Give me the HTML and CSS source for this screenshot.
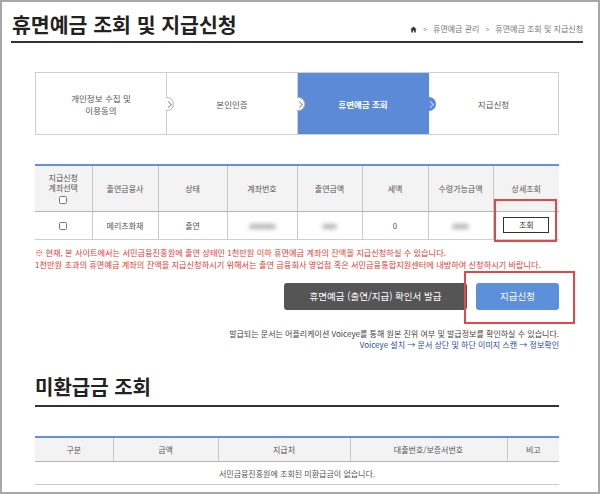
FILE: index.html
```html
<!DOCTYPE html>
<html lang="ko">
<head>
<meta charset="utf-8">
<title>휴면예금 조회 및 지급신청</title>
<link rel="stylesheet" href="styles.css">
</head>
<body>
<div class="page">
  <header class="top">
    <h1 class="title">휴면예금 조회 및 지급신청</h1>
    <nav class="crumb">
      <svg class="home" viewBox="0 0 10 10" width="7" height="7"><path d="M5 0.8 L0.6 5 H1.8 V9.2 H4.1 V6.4 H5.9 V9.2 H8.2 V5 H9.4 Z" fill="#333"/></svg>
      <span class="sep">&gt;</span>
      <span>휴면예금 관리</span>
      <span class="sep">&gt;</span>
      <span>휴면예금 조회 및 지급신청</span>
    </nav>
  </header>

  <main class="content">
    <ol class="steps">
      <li class="step"><span class="label">개인정보 수집 및<br>이용동의</span><span class="arrow"></span></li>
      <li class="step"><span class="label">본인인증</span><span class="arrow"></span></li>
      <li class="step active"><span class="label">휴면예금 조회</span><span class="arrow"></span></li>
      <li class="step"><span class="label">지급신청</span></li>
    </ol>

    <table class="grid t1">
      <colgroup>
        <col class="c57"><col class="c66"><col class="c69"><col class="c70"><col class="c65"><col class="c66"><col class="c65"><col class="c66">
      </colgroup>
      <thead>
        <tr>
          <th><span class="stack">지급신청<br>계좌선택<br><span class="chk"></span></span></th>
          <th>출연금융사</th>
          <th>상태</th>
          <th>계좌번호</th>
          <th>출연금액</th>
          <th>세액</th>
          <th>수령가능금액</th>
          <th>상세조회</th>
        </tr>
      </thead>
      <tbody>
        <tr>
          <td><span class="chk"></span></td>
          <td>메리츠화재</td>
          <td>출연</td>
          <td><span class="blur w25"></span></td>
          <td><span class="blur w13"></span></td>
          <td class="num">0</td>
          <td><span class="blur w16"></span></td>
          <td class="hlcell"><button class="view">조회</button><span class="redbox box1"></span></td>
        </tr>
      </tbody>
    </table>

    <div class="notice">
      <p>※ 현재, 본 사이트에서는 서민금융진흥원에 출연 상태인 1천만원 이하 휴면예금 계좌의 잔액을 지급신청하실 수 있습니다.</p>
      <p>1천만원 초과의 휴면예금 계좌의 잔액을 지급신청하시기 위해서는 출연 금융회사 영업점 혹은 서민금융통합지원센터에 내방하여 신청하시기 바랍니다.</p>
    </div>

    <div class="actions">
      <button class="btn dark">휴면예금 (출연/지급) 확인서 발급</button>
      <button class="btn blue">지급신청<span class="redbox box2"></span></button>
    </div>

    <div class="foot">
      <p>발급되는 문서는 어플리케이션 Voiceye를 통해 원본 진위 여부 및 발급정보를 확인하실 수 있습니다.</p>
      <p class="link">Voiceye 설치 → 문서 상단 및 하단 이미지 스캔 → 정보확인</p>
    </div>

    <h2 class="sec">미환급금 조회</h2>

    <table class="grid t2">
      <colgroup>
        <col class="c78"><col class="c105"><col class="c132"><col class="c157"><col class="c52">
      </colgroup>
      <thead>
        <tr>
          <th>구분</th>
          <th>금액</th>
          <th>지급처</th>
          <th>대출번호/보증서번호</th>
          <th>비고</th>
        </tr>
      </thead>
      <tbody>
        <tr>
          <td colspan="5">서민금융진흥원에 조회된 미환급금이 없습니다.</td>
        </tr>
      </tbody>
    </table>
  </main>
</div>
</body>
</html>
```

FILE: styles.css
```css
* { box-sizing: border-box; }

html, body {
  margin: 0;
  padding: 0;
}

body {
  background: #a8a8a8;
  padding: 2px;
  font-family: "Noto Sans CJK KR", "Noto Sans", sans-serif;
  color: #555;
}

.page {
  width: 596px;
  height: 490px;
  background: #fff;
  overflow: hidden;
}

/* header */
.top {
  margin: 0 15px 0 9px;
  padding: 9px 0 4px 1px;
  border-bottom: 2px solid #333;
  display: flex;
  align-items: flex-end;
  justify-content: space-between;
}

.title {
  margin: 0;
  font-size: 20.5px;
  line-height: 26px;
  font-weight: 700;
  color: #222;
}

.crumb {
  display: flex;
  align-items: center;
  gap: 5px;
  font-size: 8px;
  line-height: 10px;
  color: #777;
  margin-bottom: 3px;
}

.crumb .sep {
  font-size: 7px;
  color: #888;
  margin: 0 1px;
}

.home { display: block; }

/* content */
.content {
  padding: 0 39px 0 33px;
}

/* steps */
.steps {
  list-style: none;
  margin: 29px 0 0;
  padding: 0;
  height: 63px;
  border: 1px solid #cfcfcf;
  display: grid;
  grid-template-columns: 131px 131px 131px 1fr;
}

.step {
  position: relative;
  display: flex;
  align-items: center;
  justify-content: center;
  text-align: center;
  background: #fff;
  border-right: 1px solid #cfcfcf;
  font-size: 8.5px;
  line-height: 12px;
  color: #555;
}

.step:last-child { border-right: none; }

.step.active {
  background: #5b8bd6;
  color: #fff;
  font-weight: 700;
  border-right-color: #5b8bd6;
}

.arrow {
  position: absolute;
  left: 100%;
  top: 50%;
  margin-top: -7px;
  width: 8px;
  height: 14px;
  background: #fff;
  border: 1px solid #bdbdbd;
  border-left: none;
  border-radius: 0 8px 8px 0;
  z-index: 2;
}

.arrow::after {
  content: "";
  position: absolute;
  left: 0;
  top: 4px;
  width: 4px;
  height: 4px;
  border-top: 1px solid #999;
  border-right: 1px solid #999;
  transform: rotate(45deg);
}

.step.active .arrow {
  background: #5b8bd6;
  border-color: #5b8bd6;
}

.step.active .arrow::after {
  border-color: #c9dafa;
}

/* tables */
.grid {
  width: 100%;
  border-collapse: collapse;
  table-layout: fixed;
  border-top: 2px solid #6392dc;
  font-size: 8px;
  color: #555;
}

.grid th {
  background: #f3f3f3;
  font-weight: 400;
  border-left: 1px solid #c9c9c9;
  border-bottom: 1px solid #b5b5b5;
  text-align: center;
  padding: 0;
}

.grid td {
  border-left: 1px solid #c9c9c9;
  border-bottom: 1px solid #cfcfcf;
  text-align: center;
  padding: 0;
  color: #555;
}

.grid th:first-child,
.grid td:first-child { border-left: none; }

.c57 { width: 57px; }
.c66 { width: 66px; }
.c69 { width: 69px; }
.c70 { width: 70px; }
.c65 { width: 65px; }
.c78 { width: 78px; }
.c105 { width: 105px; }
.c132 { width: 132px; }
.c157 { width: 157px; }
.c52 { width: 52px; }

.t1 { margin-top: 29px; }
.t1 th { height: 46px; }
.t1 td { height: 28px; }

.num { color: #555; }

.stack {
  display: inline-block;
  line-height: 10px;
}

.chk {
  display: inline-block;
  width: 8px;
  height: 8px;
  border: 1px solid #777;
  border-radius: 1.5px;
  background: #fff;
  vertical-align: middle;
}

.stack .chk { margin-top: 2px; }

.blur {
  display: inline-block;
  height: 5px;
  background: #b5b5b5;
  border-radius: 3px;
  filter: blur(2px);
  vertical-align: middle;
}

.w25 { width: 27px; }
.w13 { width: 15px; }
.w16 { width: 17px; }

.hlcell { position: relative; }

.view {
  width: 46px;
  height: 16px;
  border: 1px solid #333;
  background: #fff;
  font-family: inherit;
  font-size: 8px;
  color: #333;
  padding: 0;
  line-height: 14px;
}

.redbox {
  position: absolute;
  border: 2px solid #e0484a;
  pointer-events: none;
}

.box1 {
  left: 0;
  right: 2px;
  top: -13px;
  bottom: -3px;
}

/* notice */
.notice {
  margin-top: 6px;
  color: #e53a30;
  font-size: 8.2px;
  line-height: 12px;
}

.notice p { margin: 0; white-space: nowrap; }

/* actions */
.actions {
  margin-top: 13px;
  display: flex;
  justify-content: flex-end;
  gap: 9px;
}

.btn {
  height: 27px;
  border: none;
  border-radius: 3px;
  color: #fff;
  font-family: inherit;
  font-size: 9.5px;
  padding: 0;
}

.btn.dark {
  width: 183px;
  background: #555;
}

.btn.blue {
  width: 83px;
  background: #5c90db;
  position: relative;
}

.box2 {
  left: -12px;
  right: -16px;
  top: -12px;
  bottom: -14px;
}

/* foot */
.foot {
  margin-top: 18px;
  text-align: right;
  font-size: 8px;
  line-height: 11px;
  color: #444;
}

.foot p { margin: 0; white-space: nowrap; }

.foot .link { color: #1f4ea3; }

/* section 2 */
.sec {
  margin: 23px 0 0;
  padding: 0 0 4px;
  font-size: 20px;
  line-height: 28px;
  font-weight: 700;
  color: #222;
  border-bottom: 2px solid #333;
}

.t2 { margin-top: 29px; }
.t2 th { height: 25px; }
.t2 td { height: 23px; border-bottom-color: #c9c9c9; }
```
